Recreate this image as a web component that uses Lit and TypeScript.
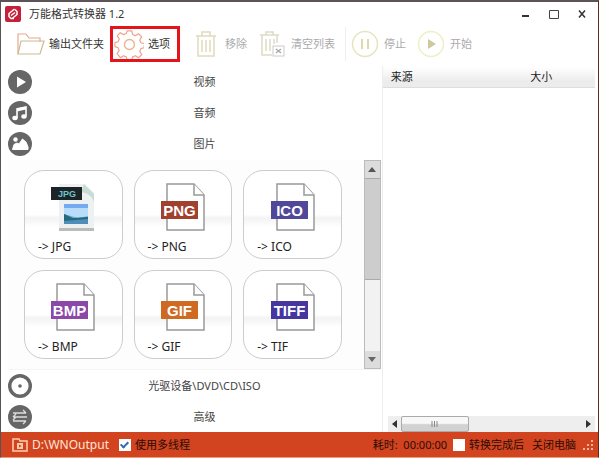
import { LitElement, html, css, svg } from "lit";
import { customElement, property } from "lit/decorators.js";

const formats = [
  { label: "JPG", tag: "JPG", color: "#1c2427", photo: true },
  { label: "PNG", tag: "PNG", color: "#a0402f" },
  { label: "ICO", tag: "ICO", color: "#50489a" },
  { label: "BMP", tag: "BMP", color: "#8a48a8" },
  { label: "GIF", tag: "GIF", color: "#cf6a22" },
  { label: "TIF", tag: "TIFF", color: "#4536a0" },
];

const disc = svg`<circle cx="12" cy="12" r="12" fill="#666"/>`;
const icons: Record<string, unknown> = {
  video: svg`${disc}<path d="M9 6.5v11l9-5.500z" fill="#fff"/>`,
  audio: svg`${disc}<path d="M9 17V8l9-2v9" fill="none" stroke="#fff" stroke-width="1.6"/><path d="M9 7.500l9-2v3l-9 2z" fill="#fff"/><ellipse cx="7" cy="17" rx="2.700" ry="2.200" fill="#fff"/><ellipse cx="16" cy="15.500" rx="2.700" ry="2.200" fill="#fff"/>`,
  image: svg`${disc}<circle cx="7.500" cy="7.500" r="2.200" fill="#fff"/><path d="M4.500 17.500l1.500-5 3-1.500 2 1 3.500-5 3.500 3 2 5v2.500z" fill="#fff" stroke="#fff" stroke-linejoin="round"/>`,
  disc: svg`<circle cx="12" cy="12" r="10.300" fill="#fff" stroke="#666" stroke-width="3.400"/><circle cx="12" cy="12" r="1.800" fill="#666"/>`,
  advanced: svg`${disc}<path d="M5 8h13M15 5l3 3M19 12H5M8 9l-3 3M5 16h13M15 19l3-3M8 12l-3 3" fill="none" stroke="#ddd" stroke-width="1.300"/>`,
};

@customElement("category-row")
class CategoryRow extends LitElement {
  @property() icon = "video";
  @property() label = "";
  static styles = css`
    :host { display: block; }
    button {
      display: flex; align-items: center; width: 100%; height: 31px;
      padding: 0; border: 0; background: none; color: #444;
      font: inherit; text-align: center;
    }
    svg { width: 24px; height: 24px; flex: none; }
    span { flex: 1; padding-right: 4px; }
  `;
  render() {
    return html`<button><svg viewBox="0 0 24 24">${icons[this.icon]}</svg><span>${this.label}</span></button>`;
  }
}

@customElement("format-card")
class FormatCard extends LitElement {
  @property() label = "";
  @property() tag = "";
  @property() color = "";
  @property({ type: Boolean }) photo = false;
  static styles = css`
    :host { display: block; }
    button {
      display: flex; flex-direction: column; align-items: center;
      box-sizing: border-box; width: 100%; height: 89px;
      padding: 12px 0 0 2px; border: 1px solid #ccc; border-radius: 20px;
      background: linear-gradient(#fff 50%, #f3f3f3 54%, #fff 65%);
      color: #222; font: inherit;
    }
    svg { width: 46px; height: 50px; flex: none; }
    text { font: bold 15px "Liberation Sans", sans-serif; fill: #fff; text-anchor: middle; }
    .small { font-size: 9px; fill: #6cc5cc; }
    span { align-self: flex-start; padding: 6px 0 0 11px; font-size: 12px; line-height: 16px; }
  `;
  render() {
    const art = this.photo
      ? svg`<path d="M8 1h26l9 9v37H8z" fill="#edf1f1"/><path d="M8 45h35v3H8z" fill="#bbb"/>
          <path d="M33 1l10 10v8c-2-6-6-9-13-10z" fill="#c5ddd2"/>
          <path d="M13 21h24v20H13z" fill="#73aaf0"/><path d="M13 25h24v8l-10 2-14-4z" fill="#b9dcf8"/>
          <path d="M13 31l9 4 15-1v7H13z" fill="#256a78"/><path d="M13 38l24-2v5H13z" fill="#4e8eb9"/>
          <rect y="4" width="31" height="13" fill="${this.color}"/><text class="small" x="16" y="14">${this.tag}</text>`
      : svg`<path d="M6 19V1h27l10 11v35H6V36" fill="#fff" stroke="#999" stroke-width="1.500"/>
          <path d="M33 1v11h10" fill="#fff" stroke="#999" stroke-width="1.500"/>
          <rect y="18" width="37" height="18" fill="${this.color}"/><text x="18.500" y="32.500">${this.tag}</text>`;
    return html`<button><svg viewBox="0 0 46 50">${art}</svg><span>-&gt; ${this.label}</span></button>`;
  }
}

@customElement("app-root")
class AppRoot extends LitElement {
  static styles = css`
    :host {
      display: flex; flex-direction: column; box-sizing: border-box; min-height: 100vh;
      border: 1px solid #5b5355; border-top-width: 2px; border-right-color: #5c2c1c; border-bottom: 1px solid #e8a07c;
      background: #fff; color: #333;
      font: 11px/16px "Noto Sans", "Noto Sans CJK SC", sans-serif;
    }
    button { font: inherit; color: inherit; background: none; border: 0; padding: 0; }
    header { display: flex; align-items: center; height: 24px; padding: 0 10px 0 4px; gap: 8px; }
    h1 { flex: 1; margin: 0; font: inherit; }
    .logo { width: 16px; height: 16px; }
    .win { display: flex; gap: 16px; }
    .win svg { display: block; width: 12px; height: 12px; }
    .tools { display: flex; align-items: center; height: 40px; box-sizing: border-box; padding: 0 0 4px 14px; }
    .tools button { display: flex; align-items: center; gap: 4px; height: 36px; box-sizing: border-box; white-space: nowrap; }
    .tools svg { width: 30px; height: 30px; flex: none; fill: none; }
    .tools .picked { border: 3px solid #e3151b; padding: 0 7px 0 1px; margin: 0 11px 0 6px; }
    .tools .off { color: #aaa; margin-right: 10px; }
    .rule { width: 1px; height: 34px; background: #eee; margin-right: 4px; }
    main { flex: 1; display: grid; grid-template-columns: 9fr 5fr; padding-right: 3px; }
    .left { display: flex; flex-direction: column; padding-left: 7px; border-right: 1px solid #eee; padding-right: 1px; }
    .gallery { flex: 1; display: flex; background: #fdfdfd; border-bottom: 1px solid #f5f5f5; margin-top: 1px; }
    .cards { flex: 1; display: grid; grid-template-columns: repeat(3, 1fr); gap: 11px; padding: 10px 22px 10px 16px; align-content: start; }
    .vbar { display: flex; flex-direction: column; width: 17px; box-sizing: border-box; border: 1px solid #bbb; background: #f2f2f2; }
    .vbar button, .hbar button { display: grid; place-items: center; }
    .vbar button { height: 17px; background: #dcdcdc; }
    .vbar .thumb { height: 100px; background: #cdcdcd; border: solid #aaa; border-width: 1px 0; }
    .space { flex: 1; }
    .right { display: flex; flex-direction: column; padding-top: 1px; }
    table { width: 100%; border-collapse: collapse; table-layout: fixed; }
    th { height: 20px; padding: 0 0 0 8px; font-weight: normal; text-align: left; color: #222; background: linear-gradient(#fff, #ececec 70%); border-bottom: 1px solid #ddd; }
    th:first-child { width: 62%; }
    .hbar { display: flex; height: 16px; background: #eee; margin-left: 5px; }
    .hbar button { width: 13px; }
    .hbar .thumb { width: 68px; box-sizing: border-box; border: 1px solid #aaa; border-radius: 2px; background: linear-gradient(#f8f8f8 45%, #d2d2d2 55%); }
    footer { display: flex; align-items: center; height: 25px; padding: 0 5px 0 11px; background: #d2431f; color: #2b0d05; white-space: nowrap; }
    footer a { display: flex; align-items: center; gap: 4px; color: #ffe6d8; font-size: 12px; text-decoration: none; }
    footer label { display: flex; align-items: center; gap: 4px; }
    footer a + label { margin-left: 10px; }
    footer a svg { width: 16px; height: 16px; }
    footer input { appearance: none; width: 12px; height: 12px; margin: 0; background: #fff; display: grid; place-items: center; }
    footer input:checked::before { content: ""; width: 3px; height: 6px; margin-bottom: 2px; border: solid #3265b8; border-width: 0 2px 2px 0; transform: rotate(45deg); }
    .elapsed { margin-right: 6px; }
    .after { margin-left: 8px; margin-right: 6px; }
    .grip { width: 11px; height: 11px; }
  `;

  render() {
    return html`
      <header>
        <svg class="logo" viewBox="0 0 16 16"><rect width="16" height="16" rx="2" fill="#c5203b"/><path d="M9.500 3L4 7.500v3l2 2h3M6.500 13l5.500-4.500v-3l-2-2M6 9.500l4-3" fill="none" stroke="#fff" stroke-width="1.500"/></svg>
        <h1>万能格式转换器 1.2</h1>
        <div class="win">
          <button aria-label="最小化"><svg viewBox="0 0 12 12"><path d="M2 8h7" stroke="#333" stroke-width="2"/></svg></button>
          <button aria-label="最大化"><svg viewBox="0 0 12 12"><path d="M1.500 2.500h9v8h-9z" fill="none" stroke="#444"/></svg></button>
          <button aria-label="关闭"><svg viewBox="0 0 12 12"><path d="M3 2.500l6 7M9 2.500l-6 7" stroke="#333" stroke-width="1.500"/></svg></button>
        </div>
      </header>
      <nav class="tools">
        <button><svg viewBox="0 0 30 30"><path d="M3 25V5h8l3 4h11v4" stroke="#e9a88f" stroke-width="1.200"/><path d="M3 25L6 12h23l-4 13z" stroke="#c9bd94" stroke-width="1.200"/></svg>输出文件夹</button>
        <button class="picked"><svg viewBox="-1 0 33 33"><path d="M13.500 2h5l1 4 3 1.300 3.500-2.200 3.500 3.500-2.200 3.500 1.300 3 4 1v0l-.500 4.500-3.500 1-1.300 3 2.200 3.500-3.500 3.500-3.500-2.200-3 1.300-1 3.300h-5l-1-3.300-3-1.300-3.500 2.200L2.500 27l2.200-3.500-1.300-3L0 19.500V15l3.500-1 1.300-3-2.200-3.500L6 4l3.500 2.200 3-1.200z" stroke="#efa08a" stroke-width="1.300" stroke-linejoin="round"/><circle cx="16" cy="17" r="5.500" stroke="#e9b48f" stroke-width="1.500"/></svg>选项</button>
        <button class="off"><svg viewBox="0 0 30 30"><path d="M5 7h20M7 7v20h16V7M11 7V3h8v4M11 11v12M15 11v12M19 11v12" stroke="#dfdcbb" stroke-width="1.500"/></svg>移除</button>
        <button class="off"><svg viewBox="0 0 30 30"><path d="M3 6h19M5 6v20h10M20 6v8M9 6V3h7v3M9 10v12M13 10v12M17 10v5" stroke="#dddcc4" stroke-width="1.500"/><rect x="16" y="17" width="11" height="10" stroke="#ccc"/><path d="M19 20l5 4M24 20l-5 4" stroke="#aaa" stroke-width="1.500"/></svg>清空列表</button>
        <div class="rule"></div>
        <button class="off"><svg viewBox="0 0 30 30"><circle cx="15" cy="15" r="12.500" stroke="#e6e5bf" stroke-width="1.500"/><path d="M12 10v10M18 10v10" stroke="#ddd9a8" stroke-width="2"/></svg>停止</button>
        <button class="off"><svg viewBox="0 0 30 30"><circle cx="15" cy="15" r="12.500" stroke="#edefc5" stroke-width="1.500"/><path d="M12 10v10l8-5z" fill="#ccc99f"/></svg>开始</button>
      </nav>
      <main>
        <section class="left">
          <category-row icon="video" label="视频"></category-row>
          <category-row icon="audio" label="音频"></category-row>
          <category-row icon="image" label="图片"></category-row>
          <div class="gallery">
            <div class="cards">
              ${formats.map((f) => html`<format-card .label=${f.label} .tag=${f.tag} .color=${f.color} .photo=${!!f.photo}></format-card>`)}
            </div>
            <div class="vbar">
              <button aria-label="向上"><svg width="8" height="6"><path d="M0 5l4-5 4 5z" fill="#555"/></svg></button>
              <div class="thumb"></div>
              <div class="space"></div>
              <button aria-label="向下"><svg width="8" height="6"><path d="M0 0l4 5 4-5z" fill="#666"/></svg></button>
            </div>
          </div>
          <category-row icon="disc" label="光驱设备\\DVD\\CD\\ISO"></category-row>
          <category-row icon="advanced" label="高级"></category-row>
        </section>
        <section class="right">
          <table><thead><tr><th>来源</th><th>大小</th></tr></thead></table>
          <div class="space"></div>
          <div class="hbar">
            <button aria-label="向左"><svg width="5" height="8"><path d="M5 0v8L0 4z" fill="#333"/></svg></button>
            <div class="thumb"><svg width="66" height="14"><path d="M30 4v6M32.500 4v6M35 4v6" stroke="#888"/></svg></div>
            <div class="space"></div>
            <button aria-label="向右"><svg width="5" height="8"><path d="M0 0v8l5-4z" fill="#333"/></svg></button>
          </div>
        </section>
      </main>
      <footer>
        <a href="#output"><svg viewBox="0 0 16 16"><path d="M1 14V2h6l1 2h7v10z" fill="#d2431f" stroke="#ffd0b4" stroke-width="1.500"/><path d="M5 6h6v6H5z" fill="#ffc9a8"/><path d="M7 7.500v3L9.500 9z" fill="#c63c1a"/></svg>D:\\WNOutput</a>
        <label><input type="checkbox" checked>使用多线程</label>
        <div class="space"></div>
        <span class="elapsed">耗时: &nbsp;00:00:00</span>
        <label><input type="checkbox">转换完成后</label>
        <span class="after">关闭电脑</span>
        <svg class="grip" viewBox="0 0 11 11"><path d="M9 1h2v2H9zM9 5h2v2H9zM5 5h2v2H5zM9 9h2v2H9zM5 9h2v2H5zM1 9h2v2H1z" fill="#f3b49c"/></svg>
      </footer>
    `;
  }
}
